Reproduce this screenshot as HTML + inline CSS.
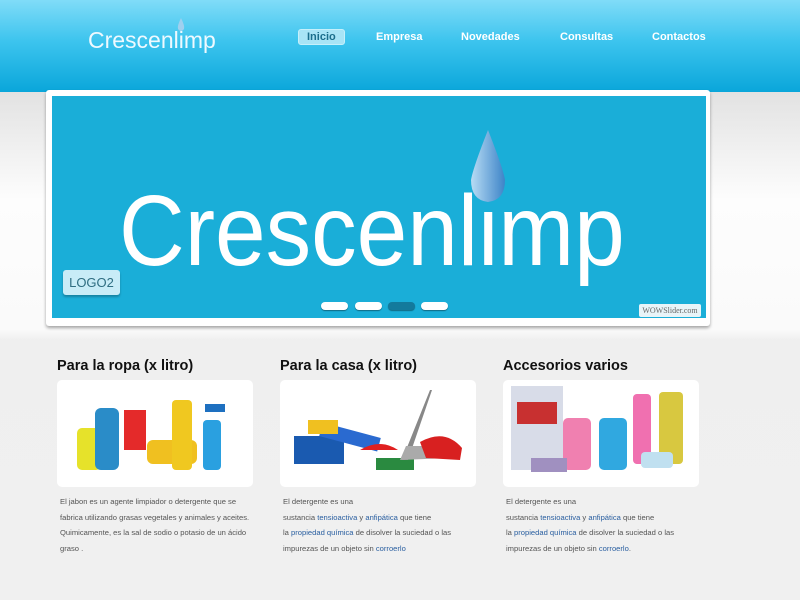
<!DOCTYPE html>
<html><head><meta charset="utf-8"><style>
*{margin:0;padding:0;box-sizing:border-box}
body{width:800px;height:600px;overflow:hidden;font-family:"Liberation Sans",sans-serif;background:linear-gradient(#e2e2e2 92px,#fdfdfd 200px,#fafafa 330px,#efefef 340px,#f0f0f0 600px);position:relative}
.hdr{position:absolute;left:0;top:0;width:800px;height:92px;background:linear-gradient(#80dcf8,#3cc4ee 45%,#0aa6da)}
.logo{position:absolute;left:88px;top:27px;color:#eef9ff;font-size:23px;font-weight:300;letter-spacing:0px}
.nav a{position:absolute;top:31px;color:#fff;font-size:11px;font-weight:bold;text-decoration:none}
.nav .on{background:#a8e4f6;color:#1b6e8c;border-radius:3px;padding:1px 8px;top:29px;left:298px;border:1px solid #c6f0fb}
.frame{position:absolute;left:46px;top:90px;width:664px;height:236px;background:#fff;border-radius:3px;box-shadow:0 2px 3px rgba(0,0,0,.35)}
.ban{position:absolute;left:52px;top:96px;width:654px;height:222px;background:#1aaed8}
.big{position:absolute;left:119px;top:181px;color:#fff;font-size:100px;line-height:100px;font-weight:normal;transform:scaleX(0.91);transform-origin:left;white-space:nowrap}
.l2{position:absolute;left:63px;top:270px;width:57px;height:25px;background:#c8ecf7;border-radius:3px;color:#2f6e82;font-size:13px;line-height:25px;text-align:center;box-shadow:0 2px 2px rgba(0,0,0,.25)}
.dot{position:absolute;top:302px;width:27px;height:8px;background:#fff;border-radius:4px;box-shadow:0 1px 1px rgba(0,0,0,.4)}
.wow{position:absolute;left:639px;top:304px;width:62px;height:13px;background:#e8f4f8;border-radius:2px;font-family:"Liberation Serif",serif;font-size:8px;color:#666;text-align:center;line-height:13px}
h2{position:absolute;top:358px;font-size:14.5px;color:#111;font-weight:bold}
.card{position:absolute;top:380px;width:196px;height:107px;background:#fff;border-radius:5px;overflow:hidden}
p{position:absolute;top:494px;width:200px;font-size:7.6px;line-height:15.5px;color:#555}
p b{font-weight:normal;color:#2a5fa0}
</style></head><body>
<div class="hdr"></div>
<div class="logo">Crescenlimp</div>
<svg style="position:absolute;left:176px;top:17px" width="10" height="16"><path d="M5 1 Q1 9 2 12 Q5 16 8 12 Q9 9 5 1Z" fill="#9fd0ef"/></svg>
<div class="nav"><a class="on">Inicio</a><a style="left:376px">Empresa</a><a style="left:461px">Novedades</a><a style="left:560px">Consultas</a><a style="left:652px">Contactos</a></div>
<div class="frame"></div>
<div class="ban"></div>
<div class="big">Crescenlimp</div>
<svg style="position:absolute;left:468px;top:128px" width="40" height="76"><defs><linearGradient id="g" x1="0" x2="1"><stop offset="0" stop-color="#b8dcf4"/><stop offset="1" stop-color="#3d84c8"/></linearGradient></defs><path d="M20 2 Q5 40 3 52 Q3 72 20 74 Q37 72 37 52 Q35 40 20 2Z" fill="url(#g)"/></svg>
<div class="l2">LOGO2</div>
<div class="dot" style="left:321px"></div><div class="dot" style="left:355px"></div><div class="dot" style="left:388px;background:#137a9c"></div><div class="dot" style="left:421px"></div>
<div class="wow">WOWSlider.com</div>

<h2 style="left:57px">Para la ropa (x litro)</h2>
<h2 style="left:280px">Para la casa (x litro)</h2>
<h2 style="left:503px">Accesorios varios</h2>

<div class="card" style="left:57px"><svg width="196" height="107">
<rect x="20" y="48" width="24" height="42" rx="5" fill="#e6e22a"/><rect x="38" y="28" width="24" height="62" rx="6" fill="#2a8cc8"/><rect x="67" y="30" width="22" height="40" fill="#e42a2a"/><rect x="90" y="60" width="50" height="24" rx="6" fill="#f0c020"/><rect x="115" y="20" width="20" height="70" rx="4" fill="#f0c820"/><rect x="146" y="40" width="18" height="50" rx="4" fill="#2aa0e0"/><rect x="148" y="24" width="20" height="8" fill="#1e70c0"/></svg></div>
<div class="card" style="left:280px"><svg width="196" height="107">
<rect x="14" y="56" width="50" height="28" fill="#1a5ab0"/><rect x="40" y="50" width="60" height="14" fill="#2a6ad0" transform="rotate(15 70 57)"/><path d="M80 70 Q100 58 118 70Z" fill="#e02020"/><rect x="96" y="78" width="38" height="12" fill="#2a8a40"/><path d="M122 80 L150 10 L152 10 L128 80Z" fill="#888"/><path d="M120 80 L170 78 L160 66 L126 66Z" fill="#aaa"/><path d="M140 62 Q165 48 182 68 L180 80 L146 78Z" fill="#d82020"/><rect x="28" y="40" width="30" height="14" fill="#f0c020"/></svg></div>
<div class="card" style="left:503px"><svg width="196" height="107">
<rect x="8" y="6" width="52" height="84" fill="#d8dce8"/><rect x="14" y="22" width="40" height="22" fill="#c83030"/><rect x="60" y="38" width="28" height="52" rx="5" fill="#f080b0"/><rect x="96" y="38" width="28" height="52" rx="5" fill="#30a8e0"/><rect x="130" y="14" width="18" height="70" rx="4" fill="#f070b0"/><rect x="156" y="12" width="24" height="72" rx="4" fill="#d8c840"/><rect x="28" y="78" width="36" height="14" fill="#a090c0"/><rect x="138" y="72" width="32" height="16" rx="4" fill="#c0e0f0"/></svg></div>

<p style="left:60px">El jabon es un agente limpiador o detergente que se fabrica utilizando grasas vegetales y animales y aceites. Quimicamente, es la sal de sodio o potasio de un ácido graso .</p>
<p style="left:283px">El detergente es una<br>sustancia <b>tensioactiva</b> y <b>anfipática</b> que tiene<br>la <b>propiedad química</b> de disolver la suciedad o las impurezas de un objeto sin <b>corroerlo</b></p>
<p style="left:506px">El detergente es una<br>sustancia <b>tensioactiva</b> y <b>anfipática</b> que tiene<br>la <b>propiedad química</b> de disolver la suciedad o las impurezas de un objeto sin <b>corroerlo</b>.</p>
</body></html>
